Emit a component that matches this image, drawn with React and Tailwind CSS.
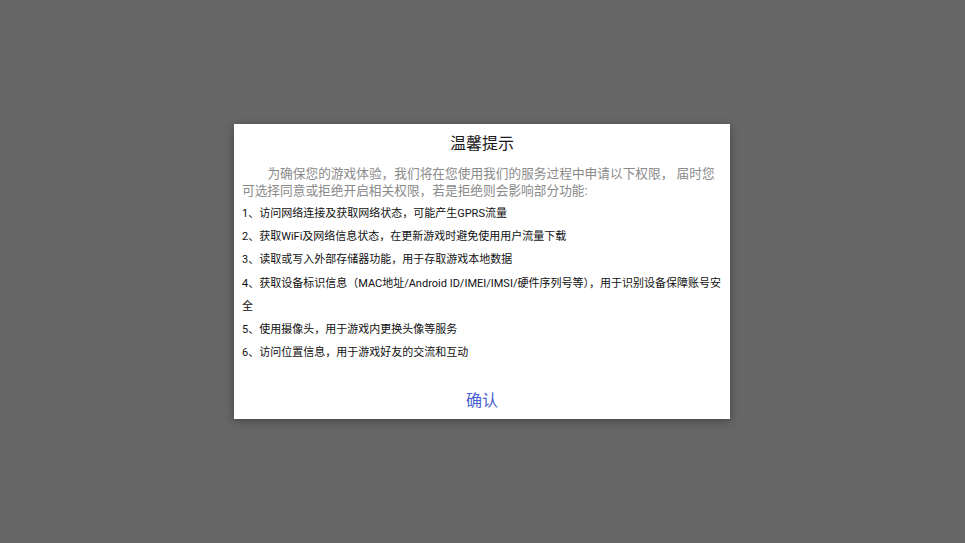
export default function App() {
  const items = [
    "1、访问网络连接及获取网络状态，可能产生GPRS流量",
    "2、获取WiFi及网络信息状态，在更新游戏时避免使用用户流量下载",
    "3、读取或写入外部存储器功能，用于存取游戏本地数据",
    "4、获取设备标识信息（MAC地址/Android ID/IMEI/IMSI/硬件序列号等），用于识别设备保障账号安全",
    "5、使用摄像头，用于游戏内更换头像等服务",
    "6、访问位置信息，用于游戏好友的交流和互动",
  ];

  return (
    <div
      className="w-[965px] h-[543px] bg-[#666666] overflow-hidden"
      style={{ fontFamily: 'Roboto, "Noto Sans CJK SC", sans-serif' }}
    >
      <div className="pt-[124px] pl-[234px]">
        <div className="w-[496px] h-[295px] bg-white shadow-[0_2px_8px_rgba(0,0,0,0.35)] px-[8px] pt-[8px] flex flex-col">
          <h1 className="text-center text-[16px] leading-[24px] text-[#1a1a1a]">温馨提示</h1>
          <p className="mt-[9px] text-[12.7px] leading-[17px] text-[#8a8a8a] indent-[2em]">
            为确保您的游戏体验，我们将在您使用我们的服务过程中申请以下权限， 届时您可选择同意或拒绝开启相关权限，若是拒绝则会影响部分功能:
          </p>
          <ul className="mt-[3px] text-[11px] leading-[23.2px] text-[#111]">
            {items.map((t) => (
              <li key={t}>{t}</li>
            ))}
          </ul>
          <div className="mt-auto mb-[6px] text-center">
            <button className="text-[16px] leading-[24px] text-[#4a5fd0]">确认</button>
          </div>
        </div>
      </div>
    </div>
  );
}
